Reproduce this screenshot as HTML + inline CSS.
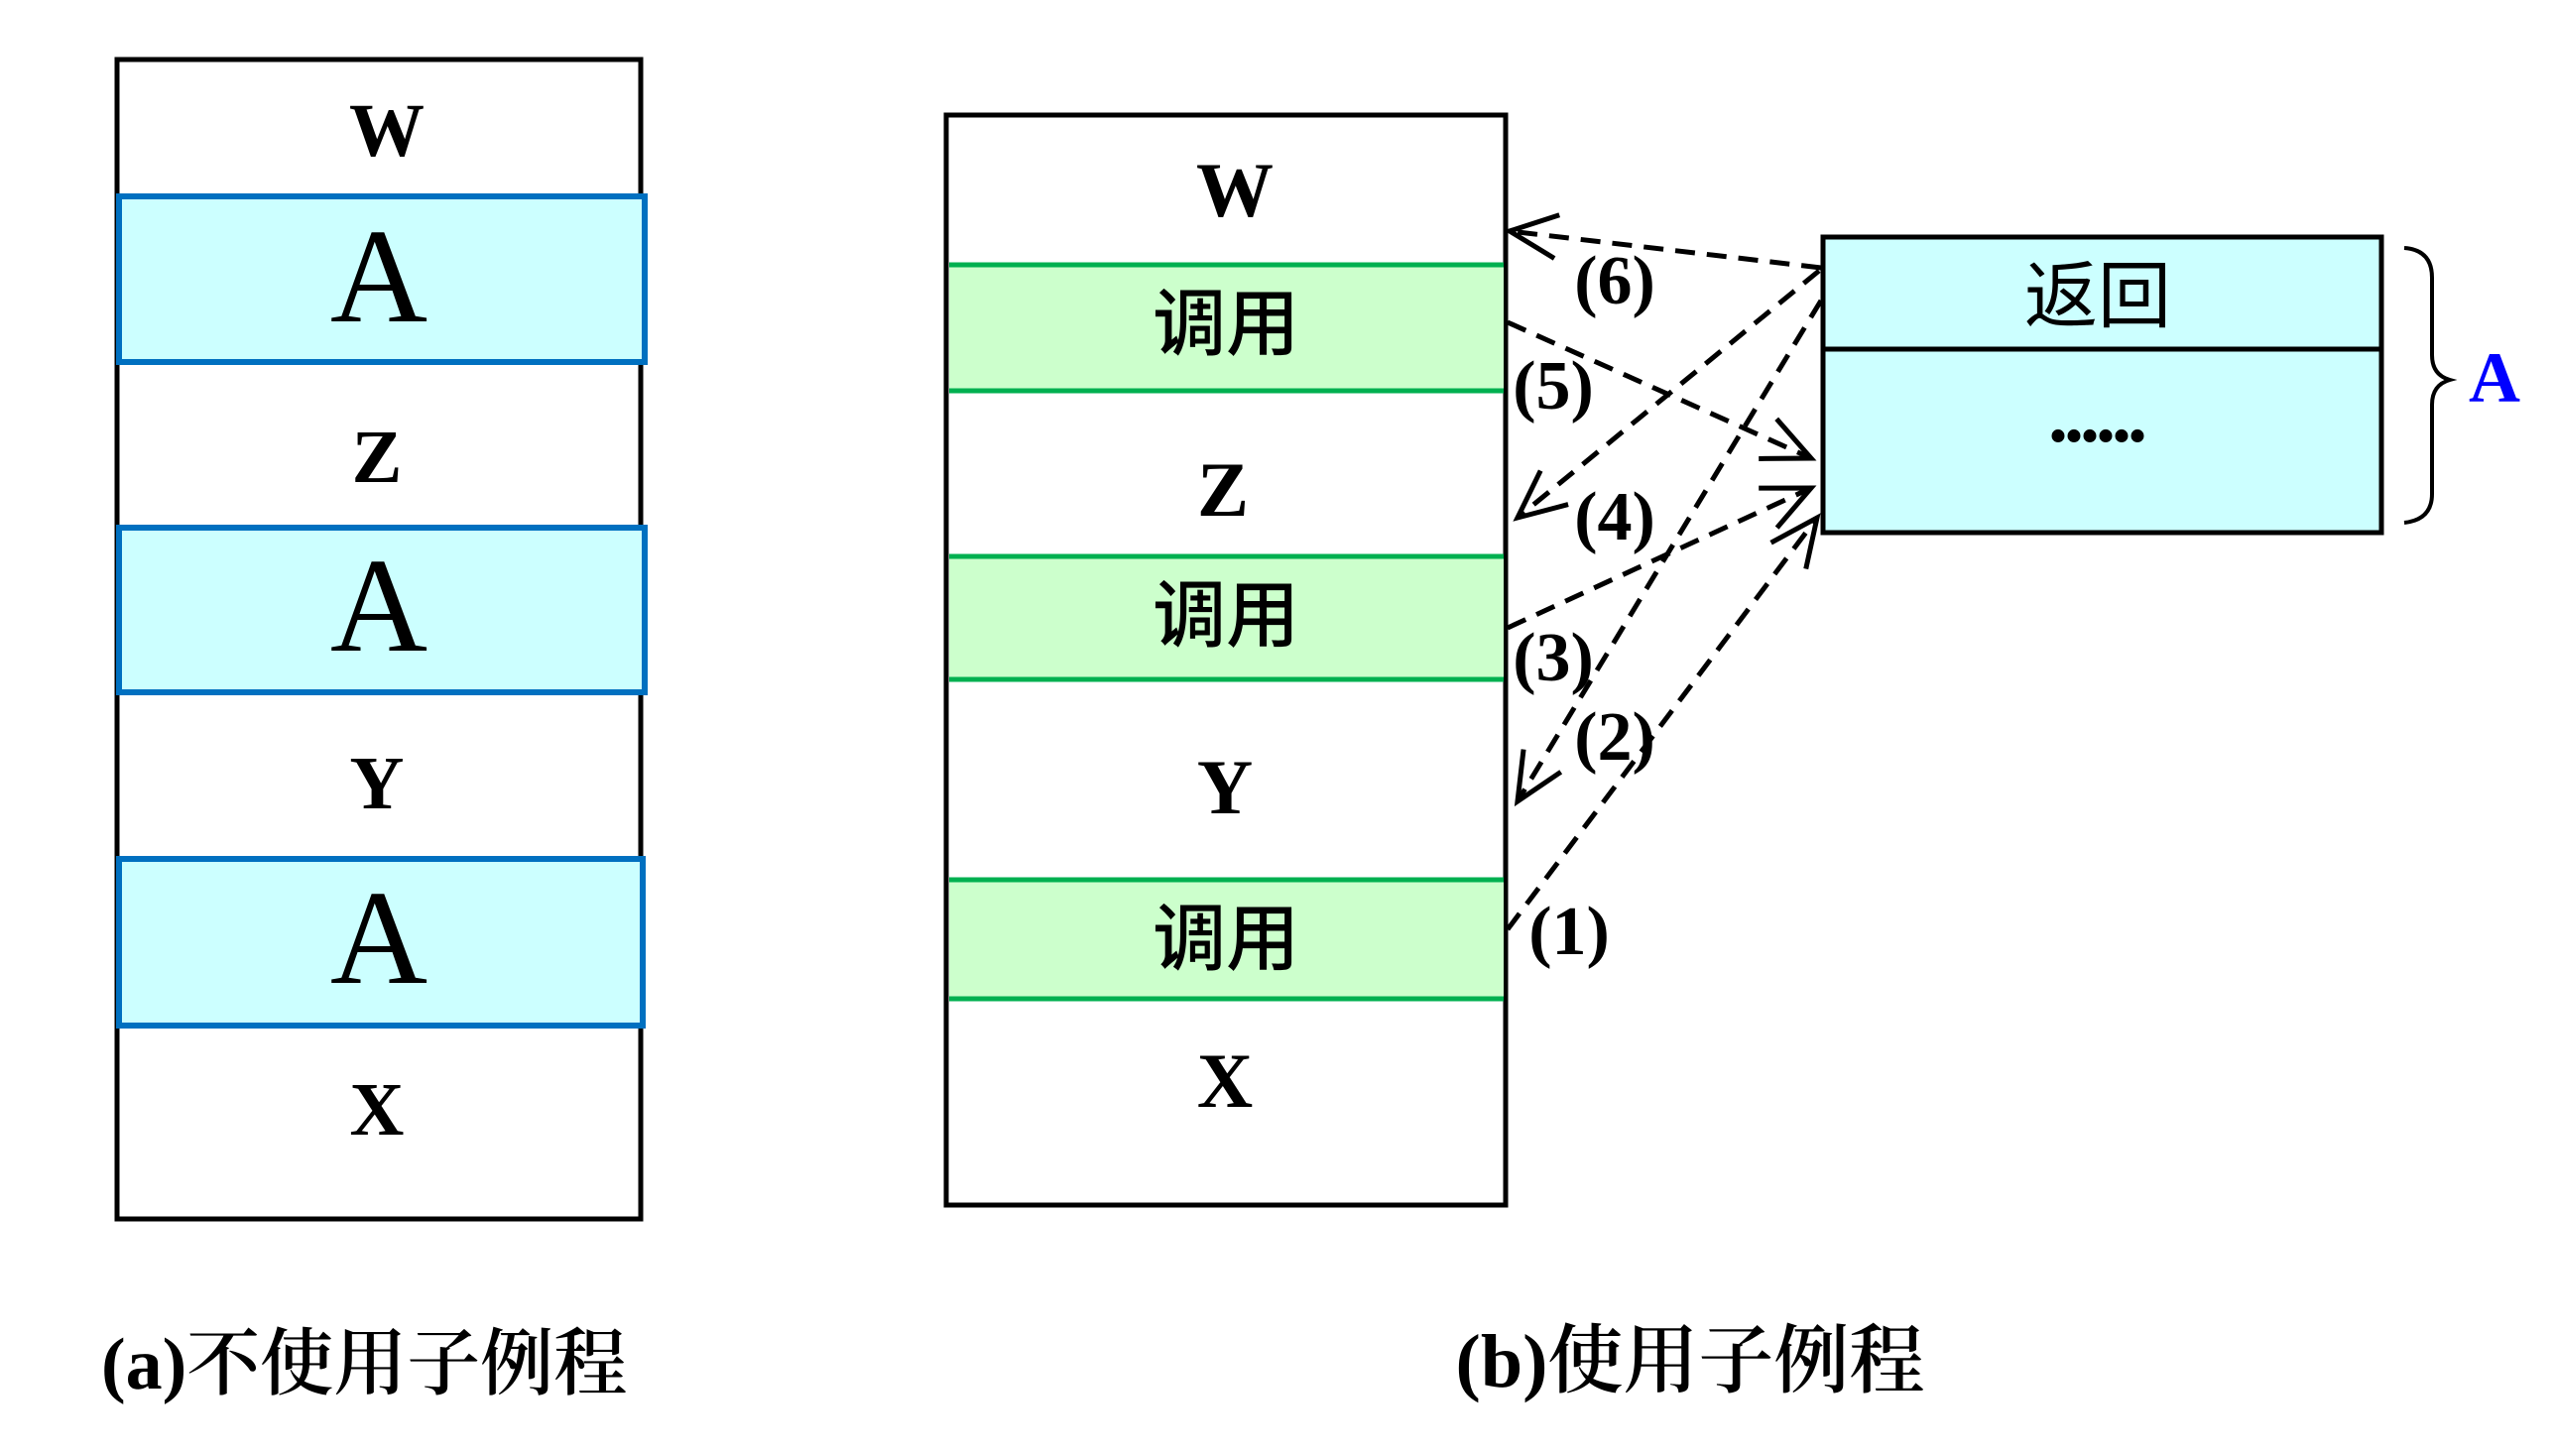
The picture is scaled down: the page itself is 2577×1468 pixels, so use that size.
<!DOCTYPE html>
<html><head><meta charset="utf-8"><style>
html,body{margin:0;padding:0;background:#fff;width:2577px;height:1468px;overflow:hidden}
svg{display:block}
.b{font-family:"Liberation Serif","Noto Serif CJK SC",serif;font-weight:bold}
</style></head><body>
<svg width="2577" height="1468" viewBox="0 0 2577 1468" xmlns="http://www.w3.org/2000/svg">
<defs>
<marker id="ah" markerWidth="60" markerHeight="60" refX="50" refY="30" orient="auto" markerUnits="userSpaceOnUse">
<path d="M2,8 L50,30 L2,52" fill="none" stroke="#000" stroke-width="5"/>
</marker>
</defs>
<rect x="118" y="60" width="528" height="1169" fill="#fff" stroke="#000" stroke-width="5"/>
<rect x="120" y="198" width="530" height="167" fill="#ccffff" stroke="#0070c0" stroke-width="6"/>
<rect x="120" y="532" width="530" height="166" fill="#ccffff" stroke="#0070c0" stroke-width="6"/>
<rect x="120" y="866" width="528" height="168" fill="#ccffff" stroke="#0070c0" stroke-width="6"/>
<g class="b" font-size="76" text-anchor="middle">
<text x="390" y="157">W</text>
<text x="380" y="486">Z</text>
<text x="380" y="815">Y</text>
<text x="380" y="1144">X</text>
</g>
<g font-family="Liberation Serif,serif" font-size="136" text-anchor="middle">
<text x="382" y="324">A</text>
<text x="382" y="656">A</text>
<text x="382" y="991">A</text>
</g>
<text x="102" y="1400" class="b" font-size="74">(a)<tspan font-weight="600" font-family="Noto Serif CJK SC,serif">不使用子例程</tspan></text>
<rect x="954" y="116" width="564" height="1099" fill="#fff" stroke="#000" stroke-width="5"/>
<rect x="957" y="267" width="559" height="127" fill="#ccffcc"/>
<rect x="957" y="561" width="559" height="124" fill="#ccffcc"/>
<rect x="957" y="887" width="559" height="120" fill="#ccffcc"/>
<g stroke="#00b050" stroke-width="5">
<line x1="957" y1="267" x2="1516" y2="267"/><line x1="957" y1="394" x2="1516" y2="394"/>
<line x1="957" y1="561" x2="1516" y2="561"/><line x1="957" y1="685" x2="1516" y2="685"/>
<line x1="957" y1="887" x2="1516" y2="887"/><line x1="957" y1="1007" x2="1516" y2="1007"/>
</g>
<g class="b" font-size="78" text-anchor="middle">
<text x="1245" y="218">W</text>
<text x="1233" y="520">Z</text>
<text x="1235" y="820">Y</text>
<text x="1235" y="1116">X</text>
</g>
<g font-family="Noto Sans CJK SC,sans-serif" font-weight="500" font-size="74" text-anchor="middle">
<text x="1236" y="352">调用</text>
<text x="1236" y="646">调用</text>
<text x="1236" y="972">调用</text>
</g>
<text x="1704" y="1398" text-anchor="middle" class="b" font-size="76">(b)<tspan font-weight="600" font-family="Noto Serif CJK SC,serif">使用子例程</tspan></text>
<rect x="1838" y="239" width="563" height="298" fill="#ccffff" stroke="#000" stroke-width="5"/>
<line x1="1838" y1="352" x2="2401" y2="352" stroke="#000" stroke-width="5"/>
<text x="2115" y="324" text-anchor="middle" font-family="Noto Sans CJK SC,sans-serif" font-size="74">返回</text>
<text x="2113" y="445" text-anchor="middle" class="b" font-size="80" letter-spacing="-4">......</text>
<path d="M2424,250 Q2452,252 2452,280 L2452,358 Q2452,378 2470,383 Q2452,388 2452,408 L2452,498 Q2452,524 2424,527" fill="none" stroke="#000" stroke-width="4"/>
<text x="2515" y="405" text-anchor="middle" font-family="Liberation Serif,serif" font-weight="bold" font-size="72" fill="#0000ff">A</text>
<g stroke="#000" stroke-width="5" stroke-dasharray="20,12" fill="none" marker-end="url(#ah)">
<line x1="1836" y1="270" x2="1522" y2="233"/>
<line x1="1520" y1="325" x2="1826" y2="462"/>
<line x1="1834" y1="273" x2="1530" y2="522"/>
<line x1="1520" y1="633" x2="1826" y2="492"/>
<line x1="1836" y1="303" x2="1530" y2="808"/>
<line x1="1520" y1="937" x2="1832" y2="522"/>
</g>
<g class="b" font-size="70" text-anchor="middle">
<text x="1628" y="306">(6)</text>
<text x="1566" y="412">(5)</text>
<text x="1628" y="544">(4)</text>
<text x="1566" y="686">(3)</text>
<text x="1628" y="766">(2)</text>
<text x="1582" y="962">(1)</text>
</g>
</svg>
</body></html>
